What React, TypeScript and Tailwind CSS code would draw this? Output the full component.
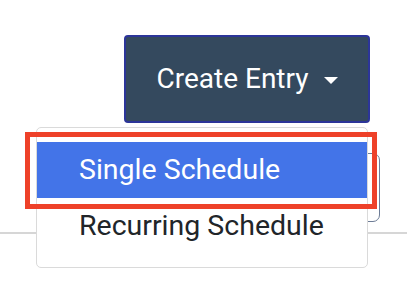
export default function App() {
  return (
    <div
      className="relative w-[407px] h-[304px] overflow-hidden bg-white"
      style={{ fontFamily: "Roboto, 'Liberation Sans', sans-serif" }}
    >
      <div className="pt-[35px] pl-[124px]">
        <button className="flex w-[246px] h-[88px] items-center justify-center gap-[15px] rounded-[4px] border-2 border-[#2c3599] bg-[#34495e] text-[28px] leading-[42px] text-white">
          <span>Create Entry</span>
          <span className="mt-[2px] h-0 w-0 border-x-[7px] border-t-[7px] border-x-transparent border-t-white" />
        </button>
      </div>

      <div className="mt-[30px] flex justify-end pr-[27px]">
        <div className="h-[69px] w-[180px] rounded-[7px] border-[1.5px] border-[#6d7c96]" />
      </div>
      <div className="mt-[10px] border-t-2 border-[#d6d6d6]" />

      <div className="absolute left-[36px] top-[127px] w-[332px] rounded-[5px] border-[1.5px] border-[#dadada] bg-white py-[13.5px] text-[28.5px]">
        <div className="h-[56px] bg-[#4374e8] px-[42px] leading-[56px] text-white">
          Single Schedule
        </div>
        <div className="h-[56px] px-[42px] leading-[56px] text-[#212529]">
          Recurring Schedule
        </div>
      </div>

      <div className="absolute left-[25px] top-[132px] h-[77px] w-[352px] border-[5px] border-[#ee4129]" />
    </div>
  );
}
